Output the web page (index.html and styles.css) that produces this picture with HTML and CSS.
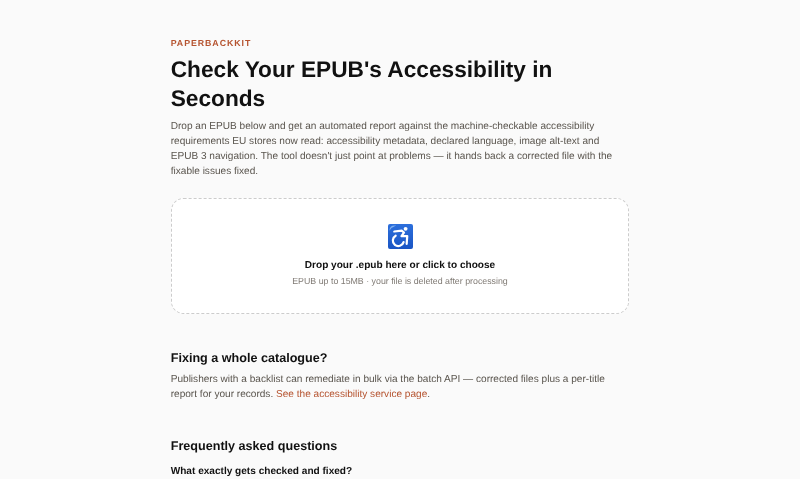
FILE: index.html
```html
<!DOCTYPE html>
<html lang="en">
<head>
<meta charset="utf-8">
<title>PaperbackKit</title>
<link rel="stylesheet" href="styles.css">
</head>
<body>
<main class="page">
  <p class="eyebrow">PAPERBACKKIT</p>
  <h1 class="title">Check Your EPUB's Accessibility in Seconds</h1>
  <p class="text">Drop an EPUB below and get an automated report against the machine-checkable accessibility requirements EU stores now read: accessibility metadata, declared language, image alt-text and EPUB 3 navigation. The tool doesn't just point at problems — it hands back a corrected file with the fixable issues fixed.</p>
  <section class="drop">
    <svg class="icon" viewBox="0 0 26 26" width="25" height="25" aria-hidden="true">
      <defs><linearGradient id="tile" x1="0" y1="0" x2="0" y2="1"><stop offset="0" stop-color="#2c6fdc"/><stop offset="1" stop-color="#1a55c4"/></linearGradient></defs>
      <rect width="26" height="26" rx="2" fill="url(#tile)"/>
      <path d="M1.5 7 Q1.5 1.5 7 1.5 L8.5 1.5 Q4 3 1.5 7Z" fill="#7fb0f0"/>
      <circle cx="18.3" cy="5" r="2" fill="#fff"/>
      <path d="M6.5 7.8 L14.2 6.8 L16.6 9 L14 12.6 L20 12.6 L19.4 20.6" fill="none" stroke="#fff" stroke-width="2.3" stroke-linejoin="round" stroke-linecap="round"/>
      <path d="M8 12.2 A5.7 5.7 0 1 0 16.2 18.8" fill="none" stroke="#fff" stroke-width="2.3" stroke-linecap="round"/>
    </svg>
    <p class="drop-main">Drop your .epub here or click to choose</p>
    <p class="drop-sub">EPUB up to 15MB · your file is deleted after processing</p>
  </section>
  <section class="block">
    <h2 class="heading">Fixing a whole catalogue?</h2>
    <p class="text">Publishers with a backlist can remediate in bulk via the batch API — corrected files plus a per-title report for your records. <a class="link" href="#">See the accessibility service page</a>.</p>
  </section>
  <section class="block">
    <h2 class="heading">Frequently asked questions</h2>
    <h3 class="question">What exactly gets checked and fixed?</h3>
  </section>
</main>
</body>
</html>
```
FILE: styles.css
```css
* { box-sizing: border-box; }
html, body { margin: 0; height: 100%; overflow: hidden; }
body {
  background: #fafafa;
  color: #111;
  font-family: "Liberation Sans", Arial, sans-serif;
  text-rendering: geometricPrecision;
}
.page { width: 458.6px; margin: 0 auto; padding-top: 38px; filter: blur(0.3px); }
.eyebrow {
  margin: 0 0 6px;
  font-size: 8.82px;
  line-height: 11px;
  font-weight: 700;
  letter-spacing: 0.93px;
  color: #b5532f;
}
.title { margin: 0 0 6px; font-size: 22.68px; line-height: 29px; font-weight: 700; color: #111; }
.text { margin: 0; max-width: 450px; font-size: 10.08px; line-height: 15px; color: #5a554e; }
.drop {
  margin-top: 19px;
  height: 116px;
  background: #fff;
  border: 1.26px dashed #ccc;
  border-radius: 12.6px;
  display: flex;
  flex-direction: column;
  align-items: center;
  padding-top: 25px;
}
.icon { display: block; }
.drop-main { margin: 10px 0 0; font-size: 10.08px; line-height: 14px; font-weight: 700; color: #111; }
.drop-sub { margin: 2px 0 0; font-size: 8.82px; line-height: 13px; color: #807b75; }
.block { margin-top: 36px; }
.heading { margin: 0 0 5px; font-size: 12.6px; line-height: 17px; font-weight: 700; color: #111; }
.link { color: #b5532f; text-decoration: none; }
.question { margin: 10px 0 0; font-size: 10.08px; line-height: 14px; font-weight: 700; color: #111; }
```
